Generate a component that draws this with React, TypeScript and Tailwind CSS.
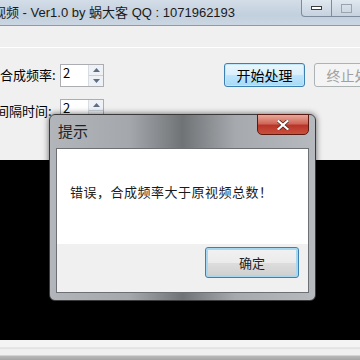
import React from "react";

const cjk = { fontFamily: '"Noto Sans CJK SC", "Noto Sans", sans-serif' };

function Spin({ value }: { value: string }) {
  return (
    <div className="flex h-[23px] w-[44px] shrink-0 border border-[#abadb3] bg-white">
      <div className="flex-1 pl-[2px] text-[13px] leading-[15px] text-black" style={cjk}>
        {value}
      </div>
      <div className="flex w-[15px] flex-col border-l border-[#d8dde4] bg-[#eef1f5]">
        <div className="flex flex-1 items-center justify-center border-b border-[#c9d0d8]">
          <svg width="7" height="4" viewBox="0 0 7 4">
            <path d="M0 4 L3.5 0 L7 4 Z" fill="#5d6e82" />
          </svg>
        </div>
        <div className="flex flex-1 items-center justify-center">
          <svg width="7" height="4" viewBox="0 0 7 4">
            <path d="M0 0 L3.5 4 L7 0 Z" fill="#5d6e82" />
          </svg>
        </div>
      </div>
    </div>
  );
}

export default function App() {
  return (
    <div className="relative h-[360px] w-[360px] overflow-hidden bg-black" style={cjk}>
      {/* Title bar */}
      <div className="flex h-[26px] items-start border-b border-[#8e9aa8] bg-[linear-gradient(180deg,#d3dde8_0%,#c2cfdd_60%,#cbd6e2_100%)]">
        <div
          className="ml-[-7px] mt-[3px] shrink-0 whitespace-nowrap text-[13px] leading-[20px] text-[#1a1a1a]"
          style={{ fontFamily: '"Liberation Sans", "Noto Sans CJK SC", sans-serif' }}
        >
          视频 - Ver1.0 by 蜗大客 QQ : 1071962193
        </div>
        <div className="ml-auto flex h-[17px] shrink-0">
          <div className="flex w-[31px] items-center justify-center rounded-bl-[4px] border border-t-0 border-[#7e8b9a] bg-[linear-gradient(180deg,#dfe7ef,#c6d2df)]">
            <div className="h-[4px] w-[11px] border border-[#3c3c3c] bg-white" />
          </div>
          <div className="flex w-[28px] items-center justify-center border-b border-[#7e8b9a] bg-[linear-gradient(180deg,#dfe7ef,#c6d2df)]">
            <div className="h-[9px] w-[11px] border border-[#9aa4af]" />
          </div>
        </div>
      </div>

      {/* Content */}
      <div className="h-[134px] bg-[#f0f0f0]">
        <div className="h-[22px] border-b border-white" />
        <div className="h-[15px]" />
        <div className="flex items-center">
          <div className="w-[60px] shrink-0 whitespace-nowrap text-[13px] leading-[18px] text-black">合成频率:</div>
          <Spin value="2" />
          <div className="ml-[120px] flex h-[24px] w-[81px] shrink-0 items-center justify-center rounded-[3px] border border-[#3c7fb1] bg-[linear-gradient(180deg,#eaf6fd_0%,#d9f0fc_50%,#bee6fd_51%,#a7d9f5_100%)] text-[14px] text-black shadow-[inset_0_0_0_1px_#c2e6fb]">
            开始处理
          </div>
          <div className="ml-[9px] flex h-[24px] w-[81px] shrink-0 items-center justify-center rounded-[3px] border border-[#adb2b5] bg-[#f4f4f4] text-[14px] text-[#a0a0a0]">
            终止处理
          </div>
        </div>
        <div className="mt-[12px] flex items-center">
          <div className="ml-[-4px] w-[64px] shrink-0 whitespace-nowrap text-[13px] leading-[18px] text-black">间隔时间:</div>
          <Spin value="2" />
        </div>
      </div>

      {/* Black area */}
      <div className="h-[180px] bg-black" />

      {/* Bottom strip */}
      <div className="h-[20px] bg-[linear-gradient(180deg,#f4f4f4_0%,#f4f4f4_35%,#d8d8d8_40%,#efefef_45%,#efefef_75%,#b8b8b8_80%,#a5a5a5_100%)]" />

      {/* Dialog */}
      <div className="absolute left-[49px] top-[114px] flex h-[187px] w-[267px] flex-col rounded-[6px] border border-[#3a3a3a] bg-[linear-gradient(90deg,#b2b6bb_0%,#a4a8ad_30%,#707376_50%,#a6aaae_70%,#b6babf_100%)] px-[6px] pb-[7px] shadow-[0_0_6px_rgba(0,0,0,0.6)]">
        <div className="relative flex h-[33px] items-center">
          <div className="ml-[2px] text-[15px] text-[#222]">提示</div>
          <div className="absolute right-[0px] top-[-1px] flex h-[21px] w-[52px] items-center justify-center rounded-b-[5px] border border-[#5a1a12] bg-[linear-gradient(180deg,#e8a898_0%,#d0685a_45%,#b8352a_55%,#c9503d_100%)]">
            <svg width="12" height="10" viewBox="0 0 12 10">
              <path d="M1.5 1 L10.5 9 M10.5 1 L1.5 9" stroke="#4a1a14" strokeWidth="3.6" strokeLinecap="square" />
              <path d="M1.5 1 L10.5 9 M10.5 1 L1.5 9" stroke="#ffffff" strokeWidth="2.2" strokeLinecap="square" />
            </svg>
          </div>
        </div>
        <div className="flex flex-1 flex-col border border-[#6c7075]">
          <div className="flex h-[95px] items-start bg-white pl-[13px] pt-[33px]">
            <span className="whitespace-nowrap text-[13px] leading-[20px] tracking-[0.5px] text-[#1a1a1a]">错误，合成频率大于原视频总数！</span>
          </div>
          <div className="flex flex-1 items-start justify-end bg-[#f0f0f0] pr-[9px] pt-[3px]">
            <div className="flex h-[31px] w-[94px] items-center justify-center rounded-[3px] border border-[#3c7fb1] bg-[linear-gradient(180deg,#f2f2f2_0%,#ebebeb_50%,#dddddd_51%,#cfcfcf_100%)] text-[13px] text-[#222] shadow-[inset_0_0_0_2px_#a8d8f0]">
              确定
            </div>
          </div>
        </div>
      </div>
    </div>
  );
}
